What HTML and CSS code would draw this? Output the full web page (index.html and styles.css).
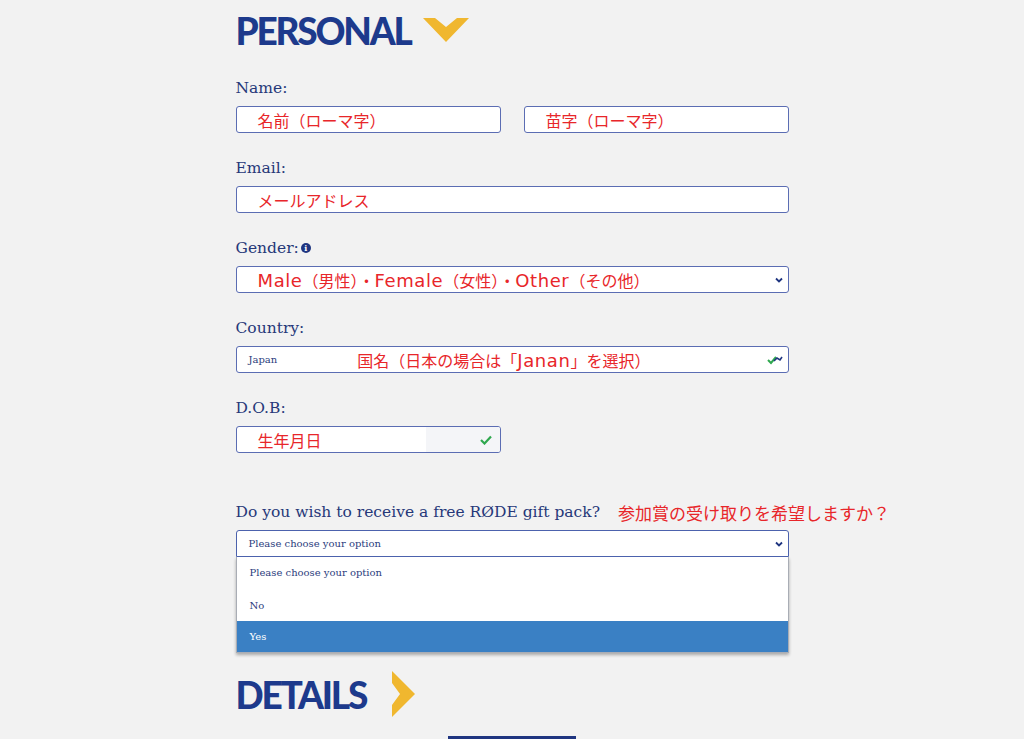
FILE: index.html
```
<!DOCTYPE html>
<html lang="ja">
<head>
    <meta charset="UTF-8">
    <meta name="viewport" content="width=device-width, initial-scale=1.0">
    <title>Personal</title>
    <link rel="stylesheet" href="styles.css">
</head>
<body>
<div class="container">
    <h2 class="section-title">PERSONAL
        <svg class="chev-down" width="46" height="24" viewBox="0 0 46 24"><polygon points="0,0 12,0 23,9 34,0 46,0 23,24" fill="#f0b72f"/></svg>
    </h2>

    <!-- Name -->
    <div class="field">
        <label>Name:</label>
        <div class="row">
            <div class="input"><span class="note">名前（ローマ字）</span></div>
            <div class="input"><span class="note">苗字（ローマ字）</span></div>
        </div>
    </div>

    <div class="field">
        <label>Email:</label>
        <div class="input"><span class="note">メールアドレス</span></div>
    </div>

    <div class="field">
        <label>Gender:<span class="info">i</span></label>
        <div class="input select">
            <span class="note"><span class="latin">Male</span>（男性）・<span class="latin">Female</span>（女性）・<span class="latin">Other</span>（その他）</span>
            <svg class="caret" width="8" height="6" viewBox="0 0 8 6"><path d="M1 1.5 L4 4.5 L7 1.5" fill="none" stroke="#1f3580" stroke-width="1.8"/></svg>
        </div>
    </div>

    <div class="field">
        <label>Country:</label>
        <div class="input select">
            <span class="value">Japan</span>
            <span class="note country-note">国名（日本の場合は「<span class="latin">Janan</span>」を選択）</span>
            <svg class="caret" width="16" height="10" viewBox="0 0 16 10"><path d="M1 5 L4 8 L9 2" fill="none" stroke="#2fa84f" stroke-width="2"/><path d="M7 6 L10 3 L13 5 L15 2" fill="none" stroke="#1f3580" stroke-width="1.6"/></svg>
        </div>
    </div>

    <div class="field">
        <label>D.O.B:</label>
        <div class="input half dob">
            <span class="note">生年月日</span>
            <span class="dob-fill"></span>
            <svg class="check" width="12" height="10" viewBox="0 0 12 10"><path d="M1 5 L4.5 8.5 L11 1.5" fill="none" stroke="#2fa84f" stroke-width="2.2"/></svg>
        </div>
    </div>

    <div class="field gift">
        <label>Do you wish to receive a free RØDE gift pack?<span class="note label-note">参加賞の受け取りを希望しますか？</span></label>
        <div class="input select focus">
            <span class="value">Please choose your option</span>
            <svg class="caret" width="8" height="6" viewBox="0 0 8 6"><path d="M1 1.5 L4 4.5 L7 1.5" fill="none" stroke="#1f3580" stroke-width="1.8"/></svg>
        </div>
        <ul class="options">
            <li>Please choose your option</li>
            <li>No</li>
            <li class="active">Yes</li>
        </ul>
    </div>

    <h2 class="section-title details">DETAILS
        <svg class="chev-right" width="24" height="46" viewBox="0 0 24 46"><polygon points="0,0 23,23 0,46 0,34 8,23 0,12" fill="#f0b72f"/></svg>
    </h2>
    <div class="bottom-line"></div>
</div>
</body>
</html>
```

FILE: styles.css
```
body {
    margin: 0;
    background-color: #f2f2f2;
    font-family: "DejaVu Serif", serif;
    overflow: hidden;
}
.container {
    width: 553px;
    margin: 0 auto;
    padding-top: 10px;
}
.section-title {
    display: flex;
    align-items: center;
    gap: 12px;
    margin: 0;
    height: 40px;
    font-family: Lato, sans-serif;
    font-weight: 900;
    font-size: 37px;
    color: #1d3a8c;
    letter-spacing: -2.2px;
}
.field {
    margin-top: 28px;
    display: flex;
    flex-direction: column;
}
.field + .field {
    margin-top: 25px;
}
label {
    display: flex;
    align-items: center;
    height: 20px;
    font-size: 15.5px;
    color: #263879;
    margin-bottom: 8px;
    white-space: nowrap;
}
.info {
    display: inline-flex;
    justify-content: center;
    align-items: center;
    width: 10px;
    height: 10px;
    margin-left: 2px;
    border-radius: 50%;
    background: #1f3580;
    color: #fff;
    font-size: 8px;
    font-weight: bold;
    line-height: 1;
}
.row {
    display: flex;
    gap: 23px;
}
.row .input {
    flex: 1;
}
.input {
    position: relative;
    display: flex;
    align-items: center;
    height: 27px;
    box-sizing: border-box;
    border: 1px solid #5b6db3;
    border-radius: 3px;
    background: #fff;
    padding-left: 21px;
}
.note {
    font-family: "DejaVu Sans", "Noto Sans CJK JP", sans-serif;
    font-size: 16px;
    color: #e8262a;
    white-space: nowrap;
}
.latin {
    font-size: 18px;
    letter-spacing: 0.6px;
}
.select .caret {
    margin-left: auto;
    margin-right: 5px;
}
.value {
    font-size: 10px;
    color: #2b3c7d;
}
.select .value {
    margin-left: -9px;
}
.country-note {
    margin-left: 80px;
}
.half {
    width: 265px;
}
.dob {
    overflow: hidden;
}
.dob .note {
    position: relative;
    z-index: 1;
}
.dob-fill {
    position: absolute;
    left: 189px;
    top: 0;
    bottom: 0;
    right: 0;
    background: #f4f5f8;
}
.dob .check {
    position: absolute;
    right: 8px;
    top: 8px;
}
.gift {
    margin-top: 49px !important;
}
.label-note {
    margin-left: 18px;
    font-size: 17px;
}
.focus {
    border-color: #4c62ad;
    border-radius: 3px 3px 0 0;
}
.options {
    list-style: none;
    margin: 0;
    padding: 0;
    background: #fff;
    border: 1px solid #a9adb5;
    border-top: none;
    box-shadow: 0 2px 3px rgba(0, 0, 0, 0.3);
}
.options li {
    height: 31px;
    line-height: 31px;
    padding-left: 13px;
    font-size: 10px;
    color: #2b3c7d;
}
.options li:first-child {
    height: 33px;
    line-height: 32px;
}
.options li.active {
    background: #3a80c4;
    color: #fff;
}
.details {
    margin-top: 18px;
    height: 46px;
    gap: 26px;
}
.bottom-line {
    width: 128px;
    height: 3px;
    margin-left: 212px;
    margin-top: 19px;
    background: #1f3580;
}
```
